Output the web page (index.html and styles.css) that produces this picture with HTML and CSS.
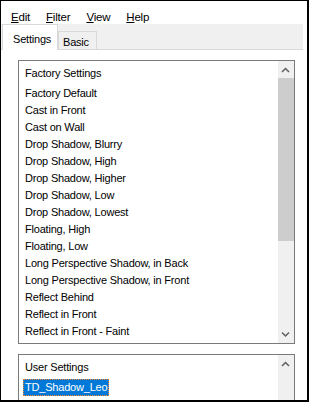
FILE: index.html
```html
<!DOCTYPE html>
<html>
<head>
<meta charset="utf-8">
<link rel="stylesheet" href="styles.css">
</head>
<body>
<div class="window">
  <div class="menubar">
    <span class="menu"><u>E</u>dit</span>
    <span class="menu"><u>F</u>ilter</span>
    <span class="menu"><u>V</u>iew</span>
    <span class="menu"><u>H</u>elp</span>
  </div>
  <div class="tabstrip">
    <div class="tab active">Settings</div>
    <div class="tab">Basic</div>
  </div>
  <div class="panel">
    <div class="listbox factory">
      <div class="items">
        <div class="header">Factory Settings</div>
        <div class="item">Factory Default</div>
        <div class="item">Cast in Front</div>
        <div class="item">Cast on Wall</div>
        <div class="item">Drop Shadow, Blurry</div>
        <div class="item">Drop Shadow, High</div>
        <div class="item">Drop Shadow, Higher</div>
        <div class="item">Drop Shadow, Low</div>
        <div class="item">Drop Shadow, Lowest</div>
        <div class="item">Floating, High</div>
        <div class="item">Floating, Low</div>
        <div class="item">Long Perspective Shadow, in Back</div>
        <div class="item">Long Perspective Shadow, in Front</div>
        <div class="item">Reflect Behind</div>
        <div class="item">Reflect in Front</div>
        <div class="item">Reflect in Front - Faint</div>
      </div>
      <div class="scrollbar">
        <div class="arrow"><svg width="16" height="17" viewBox="0 0 16 17"><polyline points="4,11 7.5,7.5 11,11" fill="none" stroke="#606060" stroke-width="1.5"/></svg></div>
        <div class="thumb"></div>
        <div class="track"></div>
        <div class="arrow"><svg width="16" height="17" viewBox="0 0 16 17"><polyline points="4,6.5 7.5,10 11,6.5" fill="none" stroke="#606060" stroke-width="1.5"/></svg></div>
      </div>
    </div>
    <div class="listbox user">
      <div class="items">
        <div class="header">User Settings</div>
        <div class="item"><span class="selected">TD_Shadow_Leo</span></div>
      </div>
      <div class="scrollbar">
        <div class="arrow"><svg width="16" height="17" viewBox="0 0 16 17"><polyline points="4,11 7.5,7.5 11,11" fill="none" stroke="#606060" stroke-width="1.5"/></svg></div>
        <div class="track"></div>
      </div>
    </div>
  </div>
</div>
</body>
</html>
```
FILE: styles.css
```css
html, body {
  margin: 0;
  padding: 0;
  background: #ffffff;
}
body {
  font-family: "Liberation Sans", Arial, sans-serif;
  font-size: 11px;
  letter-spacing: -0.2px;
  color: #000;
}
.window {
  box-sizing: border-box;
  width: 309px;
  height: 402px;
  border-top: 1px solid #000;
  border-left: 1px solid #000;
  border-right: 2px solid #000;
  border-bottom: 2px solid #000;
  background: #fff;
  overflow: hidden;
}
.menubar {
  display: flex;
  height: 14px;
  padding-top: 9px;
  padding-left: 2px;
  line-height: 14px;
  font-size: 11.5px;
}
.menu {
  padding: 0 8px;
}
.menu u {
  text-decoration-thickness: 1px;
  text-underline-offset: 1px;
}
.tabstrip {
  display: flex;
  align-items: flex-end;
  height: 25px;
  margin-right: 4px;
  padding-left: 1px;
  background: #f0f0f0;
  border-bottom: 1px solid #d9d9d9;
}
.tab {
  box-sizing: border-box;
  border: 1px solid #d9d9d9;
  border-bottom: none;
  line-height: 14px;
}
.tab.active {
  width: 56px;
  height: 26px;
  margin-bottom: -1px;
  padding: 7px 0 0 10px;
  background: #fff;
}
.tab:not(.active) {
  width: 39px;
  height: 18px;
  padding: 3px 0 0 4px;
  background: #f0f0f0;
}
.panel {
  padding: 10px 0 0 17px;
}
.listbox {
  display: flex;
  box-sizing: border-box;
  width: 277px;
  border: 1px solid #7a7a7a;
  background: #fff;
}
.listbox.factory {
  height: 284px;
}
.listbox.user {
  margin-top: 10px;
  height: 70px;
}
.items {
  flex: 1;
  padding: 4px 0 0 6px;
  line-height: 17px;
  white-space: nowrap;
  overflow: hidden;
}
.header {
  height: 17px;
  margin-bottom: 3px;
}
.item {
  height: 17px;
}
.selected {
  display: inline-block;
  box-sizing: border-box;
  height: 17px;
  line-height: 15px;
  margin-left: -2px;
  padding: 0 1px;
  border: 1px dotted #ff8728;
  background: #0078d7;
  color: #fff;
}
.scrollbar {
  display: flex;
  flex-direction: column;
  width: 16px;
  background: #f0f0f0;
}
.arrow {
  height: 17px;
  flex: none;
}
.arrow svg {
  display: block;
}
.thumb {
  height: 163px;
  flex: none;
  background: #cdcdcd;
}
.track {
  flex: 1;
}
```
